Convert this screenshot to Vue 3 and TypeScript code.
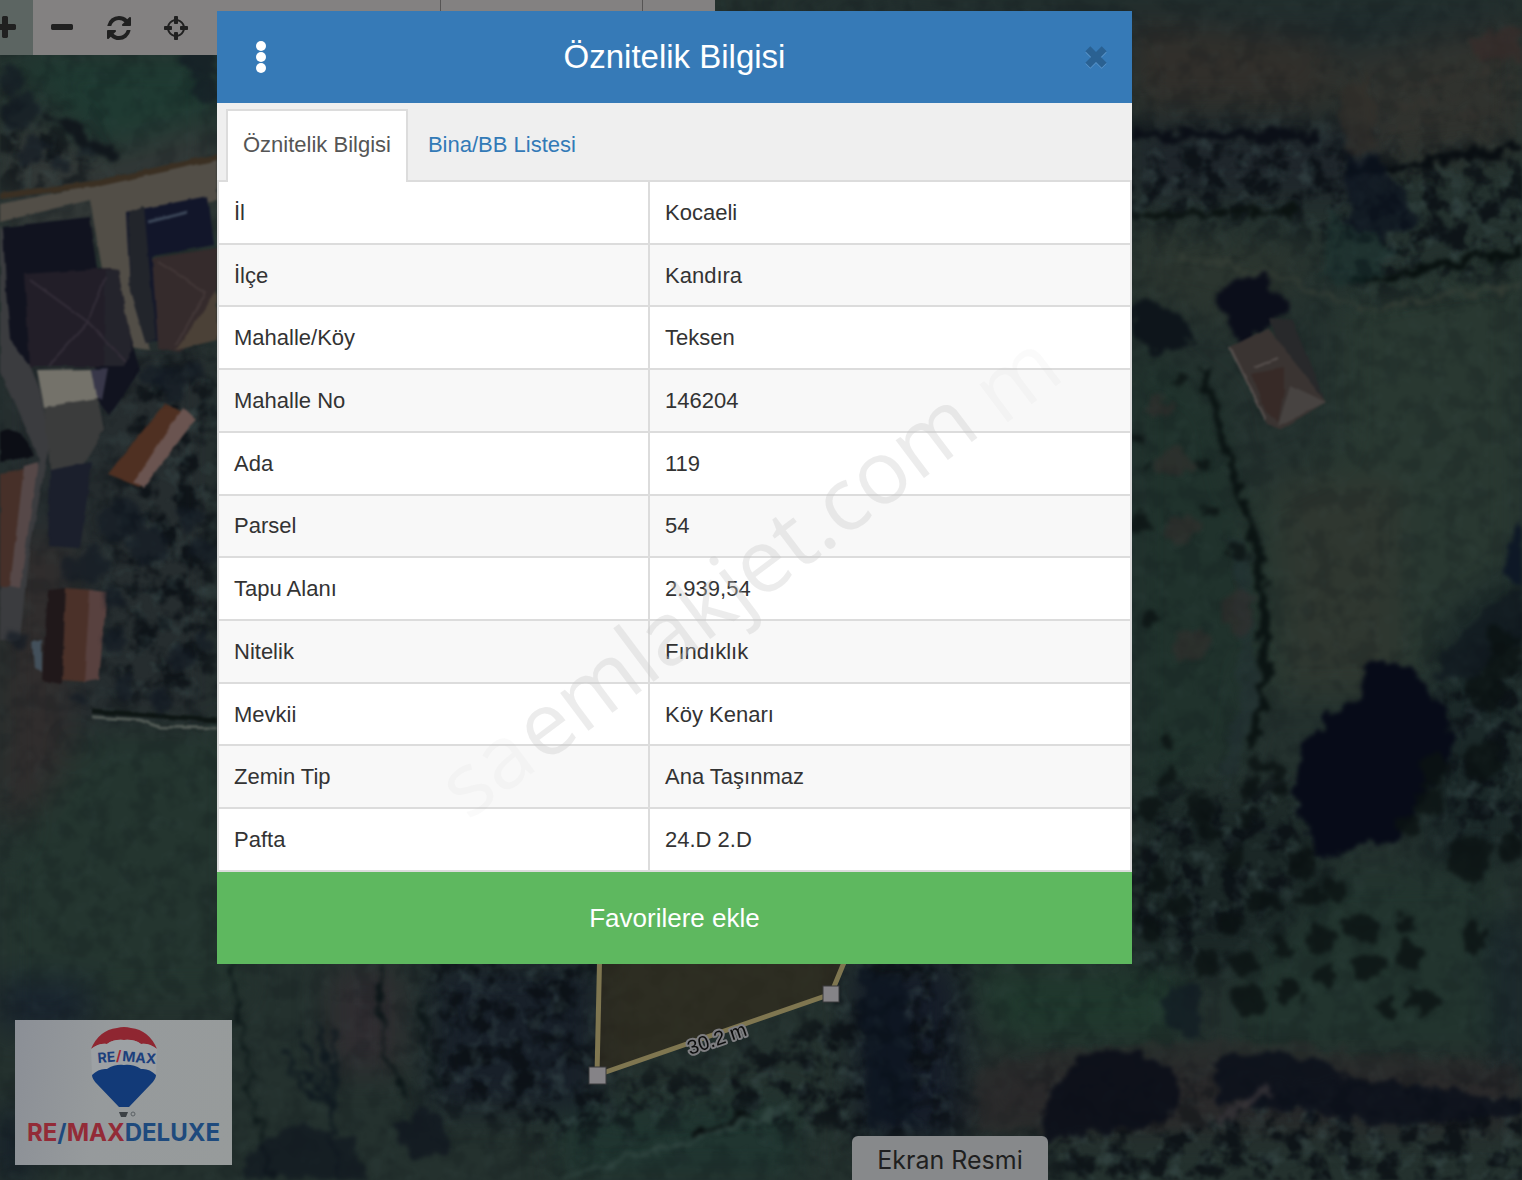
<script setup lang="ts">
import { ref } from 'vue'

interface Attribute {
  label: string
  value: string
}

const attributes: Attribute[] = [
  { label: 'İl', value: 'Kocaeli' },
  { label: 'İlçe', value: 'Kandıra' },
  { label: 'Mahalle/Köy', value: 'Teksen' },
  { label: 'Mahalle No', value: '146204' },
  { label: 'Ada', value: '119' },
  { label: 'Parsel', value: '54' },
  { label: 'Tapu Alanı', value: '2.939,54' },
  { label: 'Nitelik', value: 'Fındıklık' },
  { label: 'Mevkii', value: 'Köy Kenarı' },
  { label: 'Zemin Tip', value: 'Ana Taşınmaz' },
  { label: 'Pafta', value: '24.D 2.D' },
]

const tabs: string[] = ['Öznitelik Bilgisi', 'Bina/BB Listesi']
const activeTab = ref(0)

interface Tool {
  name: string
  path: string
}

const tools: Tool[] = [
  {
    name: 'Yakınlaştır',
    path: 'M1600 736v192q0 40-28 68t-68 28h-416v416q0 40-28 68t-68 28h-192q-40 0-68-28t-28-68v-416h-416q-40 0-68-28t-28-68v-192q0-40 28-68t68-28h416v-416q0-40 28-68t68-28h192q40 0 68 28t28 68v416h416q40 0 68 28t28 68z',
  },
  {
    name: 'Uzaklaştır',
    path: 'M1600 736v192q0 40-28 68t-68 28h-1216q-40 0-68-28t-28-68v-192q0-40 28-68t68-28h1216q40 0 68 28t28 68z',
  },
  {
    name: 'Yenile',
    path: 'M1639 1056q0 5-1 7-64 268-268 434.5t-478 166.5q-146 0-282.5-55t-243.5-157l-129 129q-19 19-45 19t-45-19-19-45v-448q0-26 19-45t45-19h448q26 0 45 19t19 45-19 45l-137 137q71 66 161 102t187 36q134 0 250-65t186-179q11-17 53-117 8-23 30-23h192q13 0 22.5 9.5t9.5 22.5zm25-800v448q0 26-19 45t-45 19h-448q-26 0-45-19t-19-45 19-45l138-138q-148-137-349-137-134 0-250 65t-186 179q-11 17-53 117-8 23-30 23h-199q-13 0-22.5-9.5t-9.5-22.5v-7q65-268 270-434.5t480-166.5q146 0 284 55.5t245 156.5l130-129q19-19 45-19t45 19 19 45z',
  },
  {
    name: 'Konum',
    path: 'M1325 1024h-109q-26 0-45-19t-19-45v-128q0-26 19-45t45-19h109q-32-108-112.5-188.5t-188.5-112.5v109q0 26-19 45t-45 19h-128q-26 0-45-19t-19-45v-109q-108 32-188.5 112.5t-112.5 188.5h109q26 0 45 19t19 45v128q0 26-19 45t-45 19h-109q32 108 112.5 188.5t188.5 112.5v-109q0-26 19-45t45-19h128q26 0 45 19t19 45v109q108-32 188.5-112.5t112.5-188.5zm339-192v128q0 26-19 45t-45 19h-143q-37 161-154.5 278.5t-278.5 154.5v143q0 26-19 45t-45 19h-128q-26 0-45-19t-19-45v-143q-161-37-278.5-154.5t-154.5-278.5h-143q-26 0-45-19t-19-45v-128q0-26 19-45t45-19h143q37-161 154.5-278.5t278.5-154.5v-143q0-26 19-45t45-19h128q26 0 45 19t19 45v143q161 37 278.5 154.5t154.5 278.5h143q26 0 45 19t19 45z',
  },
]

// Orchard trees: x, y, radius
const trees: [number, number, number][] = [
  [1171, 741, 9], [1171, 778, 9], [1150, 810, 15], [1200, 810, 14], [1207, 832, 12], [1246, 820, 7],
  [1259, 768, 10], [1275, 770, 9], [1250, 788, 10], [1284, 790, 7], [1238, 860, 11], [1230, 925, 11],
  [1208, 963, 12], [1244, 964, 12], [1283, 950, 12], [1248, 1000, 16], [1288, 992, 12], [1321, 938, 15],
  [1325, 975, 11], [1360, 928, 15], [1370, 967, 15], [1407, 924, 11], [1412, 957, 14], [1388, 1008, 9],
  [1424, 1000, 15], [1473, 939, 13], [1310, 898, 13], [1300, 865, 14], [1336, 890, 13],
  [1265, 900, 14], [1178, 380, 7], [1140, 440, 8], [1201, 465, 8], [1211, 510, 7], [1146, 463, 5],
  [1140, 525, 10], [1240, 553, 9], [1150, 618, 8], [1180, 905, 12], [1160, 880, 12], [1150, 930, 10],
  [1470, 860, 22], [1512, 850, 14], [1485, 690, 20], [1505, 660, 18], [1485, 760, 20], [1500, 640, 14],
  [1435, 770, 14], [1430, 800, 14], [1410, 825, 12],
]

// Darker clumps of vegetation near the dwellings: x, y, radius
const bushes: [number, number, number][] = [
  [172, 385, 16], [155, 375, 12], [195, 370, 10], [120, 520, 22], [95, 565, 16], [70, 570, 10],
  [150, 545, 18], [205, 550, 12], [190, 520, 14], [115, 640, 10], [205, 640, 10], [160, 700, 12],
  [125, 690, 10], [180, 660, 12], [200, 60, 16], [205, 90, 14], [20, 110, 18], [35, 150, 14],
  [60, 165, 9], [10, 80, 12], [85, 150, 9], [115, 600, 10], [80, 700, 10], [20, 640, 10],
]
</script>

<template>
  <main class="app">
    <svg class="map" viewBox="0 0 1522 1180" preserveAspectRatio="xMidYMid slice" aria-hidden="true">
      <defs>
        <filter id="rough" x="0" y="0" width="1522" height="1180" filterUnits="userSpaceOnUse" color-interpolation-filters="sRGB">
          <feTurbulence type="fractalNoise" baseFrequency="0.06" numOctaves="4" seed="4" />
          <feDisplacementMap in="SourceGraphic" scale="24" xChannelSelector="R" yChannelSelector="G" />
          <feGaussianBlur stdDeviation="2" />
        </filter>
        <filter id="soft" x="0" y="0" width="1522" height="1180" filterUnits="userSpaceOnUse" color-interpolation-filters="sRGB">
          <feTurbulence type="fractalNoise" baseFrequency="0.05" numOctaves="2" seed="7" />
          <feDisplacementMap in="SourceGraphic" scale="4" xChannelSelector="R" yChannelSelector="G" />
          <feGaussianBlur stdDeviation="1" />
        </filter>
        <filter id="haze" x="-200" y="-200" width="1922" height="1580" filterUnits="userSpaceOnUse" color-interpolation-filters="sRGB">
          <feGaussianBlur stdDeviation="16" />
        </filter>
        <filter id="dark-grain" x="0" y="0" width="100%" height="100%" color-interpolation-filters="sRGB">
          <feTurbulence type="fractalNoise" baseFrequency="0.045" numOctaves="4" seed="9" />
          <feColorMatrix values="0 0 0 0 0.04  0 0 0 0 0.06  0 0 0 0 0.08  0 5 0 0 -2.3" />
          <feGaussianBlur stdDeviation="1" />
        </filter>
        <filter id="light-grain" x="0" y="0" width="100%" height="100%" color-interpolation-filters="sRGB">
          <feTurbulence type="fractalNoise" baseFrequency="0.06" numOctaves="3" seed="21" />
          <feColorMatrix values="0 0 0 0 0.26  0 0 0 0 0.34  0 0 0 0 0.34  3 0 0 0 -1.5" />
          <feGaussianBlur stdDeviation="1" />
        </filter>
        <mask id="woodland" maskUnits="userSpaceOnUse" x="0" y="0" width="1522" height="1180">
          <g filter="url(#haze)" fill="#fff">
            <path d="M1120 130H1330L1360 160L1540 150V270L1360 290L1310 220H1120Z" />
            <path d="M1120 800L1300 780L1330 860L1280 920L1200 960H1120Z" />
            <path d="M430 950H600V1080L700 1070L850 1000V950H960V1140H850L700 1110L560 1140L430 1100Z" />
            <path d="M130 370L217 350V700L110 700V520Z" />
            <path d="M1440 670L1540 590V850L1440 840Z" />
            <path d="M1030 1070L1540 1080V1200H1060Z" />
            <path d="M0 90L60 130L110 180L0 190Z" />
          </g>
        </mask>
      </defs>

      <rect width="1522" height="1180" fill="#24312e" />

      <!-- Broad ground tones -->
      <g filter="url(#haze)">
        <path d="M0 55H217V130L110 160L30 80Z" fill="#1f3a32" />
        <path d="M0 120L110 150L217 120V230L0 260Z" fill="#313736" />
        <path d="M0 340H217V740H0Z" fill="#262d2f" />
        <path d="M0 540H70V820H0Z" fill="#302d2d" />
        <path d="M90 730H240V1000H0V860Z" fill="#24352f" />
        <path d="M715 0H1522V60H1132Z" fill="#202c2d" />
        <path d="M1132 20L1330 40V110H1132Z" fill="#312f2b" />
        <path d="M1330 60L1522 20V150L1360 170Z" fill="#30322e" />
        <path d="M1132 125H1370V200H1132Z" fill="#1f262b" />
        <path d="M1132 225L1320 250L1260 330L1132 300Z" fill="#2b352f" />
        <path d="M1340 300L1522 260V560L1400 700L1260 700L1240 500L1340 450Z" fill="#293831" />
        <path d="M1280 480H1400V690H1290Z" fill="#2f3730" />
        <path d="M1132 340L1220 400L1260 600L1240 760L1132 800Z" fill="#20322c" />
        <path d="M1132 800H1300L1340 900L1240 970H1132Z" fill="#1b2726" />
        <path d="M1440 620L1522 560V860H1420Z" fill="#1b2828" />
        <path d="M1340 870H1500V1060H1240V980Z" fill="#22342e" />
        <path d="M970 970H1180V1040H1000Z" fill="#20382d" />
        <path d="M990 1060H1522V1130H960Z" fill="#272729" />
        <path d="M430 964H600V1110H430Z" fill="#182029" />
        <path d="M850 964H960V1140H860Z" fill="#151c28" />
        <path d="M330 970H400V1070H330Z" fill="#302d31" />
        <path d="M560 1110L800 1100V1180H560Z" fill="#203530" />
        <path d="M1490 920H1522V1070H1500Z" fill="#18242b" />
        <path d="M0 980H90V1030H0Z" fill="#19242f" />
        <path d="M0 1110H30V1180H0Z" fill="#121b28" />
      </g>

      <rect width="1522" height="1180" filter="url(#light-grain)" opacity=".1" />
      <rect width="1522" height="1180" filter="url(#dark-grain)" opacity=".16" />

      <!-- Dense woodland carries a second, stronger layer of grain -->
      <g mask="url(#woodland)">
        <rect width="1522" height="1180" filter="url(#dark-grain)" opacity=".8" />
        <rect width="1522" height="1180" filter="url(#light-grain)" opacity=".35" />
      </g>

      <!-- Village road and yards -->
      <g filter="url(#soft)">
        <path d="M0 204L100 184L217 158V200L130 216L136 300L150 350L115 345L90 200L0 222Z" fill="#524e47" />
        <path d="M0 196L100 183L217 157" fill="none" stroke="#3b3023" stroke-width="6" />
        <path d="M0 225L14 250L12 320L40 390L50 440L28 560L20 640L0 640V560L40 460L0 370Z" fill="#3b3c3f" />
        <path d="M44 406L98 398L104 430L80 470L50 470Z" fill="#3b3c3c" />
        <path d="M3 227L89 217L97 268L118 270L128 330L140 370L110 415L98 400L96 365L28 363L10 340L6 290Z" fill="#11131f" />
        <path d="M24 274L110 268L105 366L30 366Z" fill="#221e28" />
        <path d="M105 270L118 270L132 350L124 366L104 366Z" fill="#24242c" />
        <path d="M30 280L88 322L126 362M105 278L88 322L48 366" fill="none" stroke="#342e39" stroke-width="2" />
        <path d="M126 212L208 196L214 245L152 256L160 340L146 344L130 290Z" fill="#12162a" />
        <path d="M128 212L144 206L156 340L146 344L130 290Z" fill="#22252b" />
        <path d="M148 222L188 212" stroke="#3b4658" stroke-width="3" />
        <path d="M152 258L217 248V310L180 352L158 348Z" fill="#352b2c" />
        <path d="M158 262L206 292L176 345" fill="none" stroke="#433838" stroke-width="2" />
        <path d="M217 290V340L176 350Z" fill="#4b4137" />
        <path d="M37 370L91 369L98 398L44 407Z" fill="#74726a" />
        <path d="M91 369L108 368L102 400L96 396Z" fill="#383749" />
        <path d="M165 403L195 420L140 487L108 474Z" fill="#4f3022" />
        <path d="M182 408L195 420L144 487L134 482Z" fill="#6a5450" />
        <path d="M0 432Q20 420 34 456L0 462Z" fill="#0c0e15" />
        <path d="M0 474L24 470L16 586H0Z" fill="#473029" />
        <path d="M24 466L38 462L20 588L10 586Z" fill="#564848" />
        <path d="M50 470L92 462L80 548L48 546Z" fill="#1b1f2c" />
        <path d="M48 590L66 588L62 684L42 680Z" fill="#20181a" />
        <path d="M66 588L94 590L88 682L62 680Z" fill="#4b3129" />
        <path d="M90 590L107 592L99 680L84 682Z" fill="#58413f" />
        <path d="M32 642L42 640V672L34 668Z" fill="#43505b" />
        <path d="M92 717L140 720L160 727L217 728" fill="none" stroke="#525a55" stroke-width="3" />
        <path d="M92 711L217 720" stroke="#0e1614" stroke-width="5" />
      </g>

      <g filter="url(#rough)">
        <circle v-for="(bush, i) in bushes" :key="i" :cx="bush[0]" :cy="bush[1]" :r="bush[2]" fill="#121a24" opacity=".65" />
        <path d="M40 115L70 122L120 155L110 164Z" fill="#11171c" />

        <!-- Field boundaries -->
        <path d="M1132 136H1320" stroke="#0b0f17" stroke-width="9" />
        <path d="M1132 216L1300 210" stroke="#0b1311" stroke-width="7" />
        <path d="M1345 165L1380 172L1522 146" fill="none" stroke="#090e12" stroke-width="9" />
        <path d="M1350 280L1420 270L1522 250" fill="none" stroke="#08100f" stroke-width="8" />
        <path d="M1345 160L1380 160L1420 220L1380 240L1350 220Z" fill="#0c1320" opacity=".7" />
        <path d="M1330 210L1400 250L1360 285L1320 280Z" fill="#1a3431" opacity=".4" />
        <path d="M1180 255L1290 280L1360 310L1522 285" fill="none" stroke="#343d35" stroke-width="4" />
        <path d="M1335 90Q1345 150 1350 160L1375 150L1370 80Z" fill="#352f2a" opacity=".5" />
        <path d="M1470 40L1522 25V60L1480 60Z" fill="#3b2c2a" opacity=".6" />
        <path d="M1380 110L1522 80M1390 130L1522 105M1400 90L1522 60" stroke="#3a3631" stroke-width="2" opacity=".7" />
        <path d="M1203 365L1228 460L1256 540L1266 620L1262 700L1252 750" fill="none" stroke="#0b1413" stroke-width="9" />
        <path d="M1240 540L1250 700L1225 780" fill="none" stroke="#263439" stroke-width="16" opacity=".4" />

        <!-- Barn shadow -->
        <path d="M1132 300Q1180 295 1196 345L1150 350L1132 335Z" fill="#0e151b" />
        <path d="M1216 300Q1230 274 1258 274Q1290 290 1288 310L1240 346Z" fill="#0b0e1a" />
      </g>

      <!-- Barn -->
      <g filter="url(#soft)">
        <path d="M1270 318L1292 320L1324 398L1290 385Z" fill="#28292b" />
        <path d="M1230 347L1268 328L1326 402L1280 430L1268 424Z" fill="#3a3432" />
        <path d="M1250 374L1284 368L1284 390L1278 422L1266 412Z" fill="#372a27" />
        <path d="M1290 385L1326 402L1278 426Z" fill="#474341" />
        <path d="M1230 347L1266 420M1254 368L1278 358" fill="none" stroke="#57504e" stroke-width="2" />
      </g>

      <g filter="url(#rough)">
        <!-- Large shadow pool -->
        <path d="M1362 664L1385 660L1415 670L1432 700L1450 720L1452 760L1420 800L1400 840L1350 850L1318 855L1300 820L1294 775L1306 740L1335 710L1355 705Z" fill="#070b18" />
        <path d="M1522 520L1508 545L1505 575L1522 590Z" fill="#0e1826" />
        <path d="M1430 675L1470 620L1522 590V640L1470 680Z" fill="#111a21" opacity=".8" />

        <circle v-for="(tree, i) in trees" :key="i" :cx="tree[0]" :cy="tree[1]" :r="tree[2]" fill="#0b1313" opacity=".8" />
        <g fill="#3c2d2d" opacity=".4">
          <ellipse cx="1174" cy="463" rx="20" ry="14" />
          <ellipse cx="1180" cy="530" rx="18" ry="12" />
          <ellipse cx="1192" cy="645" rx="16" ry="18" />
          <ellipse cx="1238" cy="610" rx="16" ry="24" />
          <ellipse cx="1158" cy="408" rx="14" ry="9" />
        </g>

        <!-- Hedge along the lower edge -->
        <path d="M980 1070L1060 1050L1130 1045L1240 1040L1522 1070V1095L1280 1080L1200 1130L980 1130Z" fill="#302d2d" opacity=".4" />
        <path d="M1040 1130Q1055 1055 1110 1050Q1170 1050 1180 1090L1170 1120L1050 1140Z" fill="#0c101a" opacity=".9" />
        <path d="M1214 1060L1270 1050L1330 1065L1340 1075L1520 1100L1522 1115L1400 1125L1280 1110L1215 1100Z" fill="#0c111b" opacity=".85" />
        <path d="M1165 985L1200 985V1035L1165 1030Z" fill="#0f1a22" opacity=".7" />
        <path d="M1215 1125L1245 1105L1270 1085" fill="none" stroke="#3f3b3e" stroke-width="8" opacity=".7" />

        <!-- Bare trees -->
        <path d="M232 964L250 1090L270 1180" fill="none" stroke="#0c1718" stroke-width="4" />
        <path d="M340 1180L330 1110L290 1072M330 1110L300 1030M332 1115L320 1020M335 1110L334 1030M328 1100L280 1050" fill="none" stroke="#101a20" stroke-width="4" />
        <path d="M380 964L383 1040L395 1080L410 1092M420 1000L430 1060L440 1090" fill="none" stroke="#0b1517" stroke-width="4" />
        <path d="M250 1150L290 1120L350 1140L370 1180H240Z" fill="#101720" opacity=".7" />
        <path d="M395 1130L430 1100L450 1150L410 1160Z" fill="#0e141e" opacity=".7" />
        <path d="M560 1180L720 1130L790 1108" fill="none" stroke="#314641" stroke-width="4" />
        <path d="M690 1134L750 1115" stroke="#080d0e" stroke-width="5" />
        <path d="M860 970L905 980L915 1120L870 1130Z" fill="#0c1420" opacity=".7" />
      </g>

      <!-- Selected parcel -->
      <path d="M600 950L597 1075L831 994L850 950Z" fill="#332b1a" opacity=".6" />
      <path d="M600 940L597 1075L831 994L850 948" fill="none" stroke="#7f7650" stroke-width="5" />
      <g fill="#858387" stroke="#3a3a3c" stroke-width="1">
        <rect x="589" y="1067" width="17" height="17" />
        <rect x="823" y="986" width="16" height="16" />
      </g>
      <text class="distance" transform="translate(719 1045) rotate(-19)" text-anchor="middle">30.2 m</text>
    </svg>

    <nav class="toolbar" aria-label="Harita araçları">
      <button v-for="tool in tools" :key="tool.name" class="tool" type="button" :aria-label="tool.name">
        <svg viewBox="0 0 1792 1792" aria-hidden="true"><path :d="tool.path" /></svg>
      </button>
      <span class="segment segment-wide"></span>
      <span class="segment segment-mid"></span>
      <span class="segment segment-end"></span>
    </nav>

    <section class="dialog" role="dialog" aria-labelledby="dialog-title">
      <header class="dialog-header">
        <button class="icon-button menu-button" type="button" aria-label="Menü">
          <svg class="dots" viewBox="0 0 10 32" aria-hidden="true">
            <circle cx="5" cy="5" r="5" />
            <circle cx="5" cy="16" r="5" />
            <circle cx="5" cy="27" r="5" />
          </svg>
        </button>
        <h1 id="dialog-title">Öznitelik Bilgisi</h1>
        <button class="icon-button close-button" type="button" aria-label="Kapat">
          <svg class="close" viewBox="0 0 24 24" aria-hidden="true">
            <path class="close-glow" d="M5 6L19 20M19 6L5 20" />
            <path class="close-mark" d="M5 5L19 19M19 5L5 19" />
          </svg>
        </button>
      </header>

      <div class="tabs" role="tablist">
        <button
          v-for="(tab, i) in tabs"
          :key="tab"
          class="tab"
          :class="{ active: activeTab === i }"
          type="button"
          role="tab"
          :aria-selected="activeTab === i"
          @click="activeTab = i"
        >
          {{ tab }}
        </button>
      </div>

      <table class="attributes">
        <tbody>
          <tr v-for="row in attributes" :key="row.label">
            <th scope="row">{{ row.label }}</th>
            <td>{{ row.value }}</td>
          </tr>
        </tbody>
      </table>

      <button class="favorite" type="button">Favorilere ekle</button>

      <svg class="watermark" viewBox="0 0 915 953" aria-hidden="true">
        <g transform="translate(326 754) rotate(-37)">
          <text class="ghost" x="-94" y="0">sa</text>
          <text class="mark" x="0" y="0">emlakjet.com</text>
          <text class="ghost" x="570" y="6">m</text>
        </g>
      </svg>
    </section>

    <footer class="brand">
      <svg class="balloon" viewBox="0 0 70 92" role="img" aria-label="RE/MAX">
        <path d="M2 22Q10 3 28 1Q35 -1 42 1Q60 3 68 22Q60 16 52 17Q45 12 35 13Q25 12 18 17Q10 16 2 22Z" fill="#8f2631" />
        <path d="M2 22Q10 16 18 17Q25 12 35 13Q45 12 52 17Q60 16 68 22L67 48Q60 41 52 42Q44 37 35 38Q26 37 18 42Q10 41 3 48Z" fill="#9da1a4" />
        <path d="M3 48Q10 41 18 42Q26 37 35 38Q44 37 52 42Q60 41 67 48Q67 52 62 57L40 80H30L8 57Q3 52 3 48Z" fill="#123a78" />
        <path d="M30 85H39L37 90H32Z" fill="#3c4145" />
        <circle cx="44" cy="87" r="2" fill="none" stroke="#5b6165" />
        <g class="balloon-name">
          <text transform="translate(9 36) rotate(-5)">RE</text>
          <text x="27" y="34" class="balloon-slash">/</text>
          <text transform="translate(33 34) rotate(5)">MAX</text>
        </g>
      </svg>
      <div class="brand-name"><span class="red">RE</span><span class="blue">/</span><span class="red">MAX</span><span class="blue">DELUXE</span></div>
    </footer>

    <div class="capture-label">Ekran Resmi</div>
  </main>
</template>

<style>
body {
  margin: 0;
}
</style>

<style scoped>
.app {
  position: relative;
  display: flex;
  flex-direction: column;
  box-sizing: border-box;
  min-height: 100vh;
  padding: 11px 390px 15px 217px;
  overflow: hidden;
  background: #24312e;
  font-family: "Liberation Sans", Arial, sans-serif;
}

button {
  margin: 0;
  padding: 0;
  border: 0;
  background: none;
  font: inherit;
  cursor: pointer;
}

.map {
  position: absolute;
  inset: 0;
  width: 100%;
  height: 100%;
}

.distance {
  font-size: 20px;
  fill: #0c0c0c;
  stroke: #7d7d80;
  stroke-width: 4px;
  stroke-linejoin: round;
  paint-order: stroke;
}

.toolbar {
  position: absolute;
  top: 0;
  left: 0;
  display: flex;
  height: 55px;
}

.tool {
  display: flex;
  align-items: center;
  justify-content: center;
  width: 57px;
  background: #838181;
}

.tool:first-child {
  margin-left: -24px;
  background: #5c6562;
}

.tool svg {
  width: 28px;
  height: 28px;
  fill: #202020;
}

.segment {
  box-sizing: border-box;
  background: #838181;
  border-right: 1px solid #565454;
}

.segment-wide {
  width: 237px;
}

.segment-mid {
  width: 202px;
  height: 12px;
}

.segment-end {
  width: 72px;
  height: 12px;
  border-right: 0;
}

.dialog {
  position: relative;
  display: flex;
  flex-direction: column;
  background: #fff;
}

.dialog-header {
  display: flex;
  align-items: center;
  justify-content: space-between;
  height: 92px;
  padding-left: 16px;
  background: #367ab7;
}

.dialog-header h1 {
  margin: 0;
  color: #fff;
  font-size: 33px;
  font-weight: 400;
  line-height: 48px;
}

.icon-button {
  display: flex;
  align-items: center;
  justify-content: center;
  height: 48px;
}

.menu-button {
  width: 56px;
}

.close-button {
  width: 72px;
}

.dots {
  width: 10px;
  height: 32px;
  fill: #fff;
}

.close {
  width: 28px;
  height: 28px;
}

.close path {
  fill: none;
  stroke-width: 6;
}

.close .close-glow {
  stroke: #5c96cb;
}

.close .close-mark {
  stroke: #2a6192;
}

.tabs {
  display: flex;
  gap: 3px;
  height: 71px;
  padding: 6px 9px 0;
  background: #efefef;
}

.tab {
  height: 71px;
  padding: 0 15px 2px;
  border: 2px solid transparent;
  border-bottom: 0;
  color: #337ab7;
  font-size: 22px;
  line-height: 32px;
}

.tab.active {
  position: relative;
  z-index: 1;
  height: 73px;
  padding-bottom: 4px;
  background: #fff;
  border-color: #dcdcdc;
  color: #555;
}

.attributes {
  width: 100%;
  height: 692px;
  border-collapse: collapse;
  table-layout: fixed;
  color: #333;
  font-size: 22px;
  line-height: 32px;
}

.attributes th,
.attributes td {
  padding: 1px 15px 0;
  border: 2px solid #dcdcdc;
  font-weight: 400;
  text-align: left;
}

.attributes th {
  width: 399px;
}

.attributes tr:nth-child(even) {
  background: #f8f8f8;
}

.favorite {
  height: 92px;
  background: #5eb85f;
  color: #fff;
  font-size: 26px;
  line-height: 32px;
}

.watermark {
  position: absolute;
  inset: 0;
  width: 100%;
  height: 100%;
  pointer-events: none;
  font-family: "Open Sans", sans-serif;
  font-size: 88px;
}

.mark {
  fill: rgba(200, 200, 200, 0.34);
}

.ghost {
  fill: rgba(190, 190, 190, 0.08);
}

.brand {
  position: absolute;
  bottom: 15px;
  left: 15px;
  display: flex;
  flex-direction: column;
  align-items: center;
  box-sizing: border-box;
  width: 217px;
  height: 145px;
  padding-top: 7px;
  background: linear-gradient(100deg, #8b8f96, #969a9c 40%, #979b9b);
}

.balloon {
  width: 70px;
  height: 92px;
}

.balloon-name {
  fill: #1c3f7c;
  font-family: Inter, sans-serif;
  font-size: 14px;
  font-weight: 700;
}

.balloon-name .balloon-slash {
  fill: #a52733;
}

.brand-name {
  font-family: Inter, sans-serif;
  font-size: 24px;
  font-weight: 700;
  line-height: 28px;
}

.red {
  color: #932b37;
}

.blue {
  color: #1e4a7d;
}

.capture-label {
  position: absolute;
  bottom: 0;
  left: 56%;
  padding: 8px 25px 4px;
  border-radius: 6px 6px 0 0;
  background: #87898b;
  color: #1f1f20;
  font-family: Inter, sans-serif;
  font-size: 25px;
  line-height: 32px;
}
</style>
